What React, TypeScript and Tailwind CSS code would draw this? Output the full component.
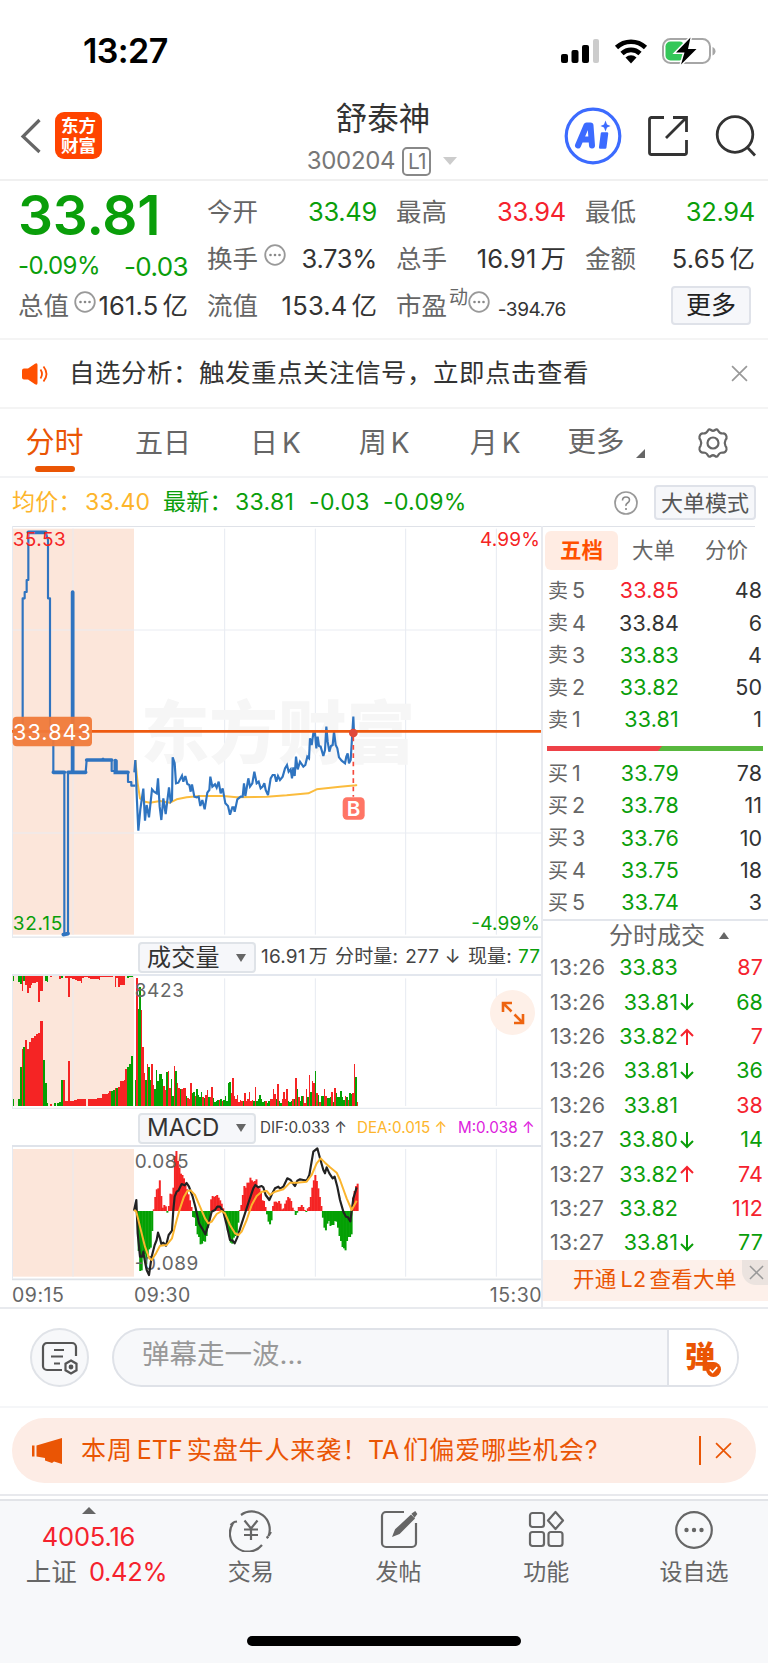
import type { ReactNode } from "react";
import clsx from "clsx";

type Tone = "up" | "down" | "flat";

const toneCls: Record<Tone, string> = {
  up: "text-[#f5222d]",
  down: "text-[#0a9e0a]",
  flat: "text-[#333]",
};

const RED = "#f52424";
const GREEN = "#04a004";

const asks: [string, string, string, Tone][] = [
  ["卖", "5", "33.85", "up"],
  ["卖", "4", "33.84", "flat"],
  ["卖", "3", "33.83", "down"],
  ["卖", "2", "33.82", "down"],
  ["卖", "1", "33.81", "down"],
];
const askQty = ["48", "6", "4", "50", "1"];
const bids: [string, string, string, Tone][] = [
  ["买", "1", "33.79", "down"],
  ["买", "2", "33.78", "down"],
  ["买", "3", "33.76", "down"],
  ["买", "4", "33.75", "down"],
  ["买", "5", "33.74", "down"],
];
const bidQty = ["78", "11", "10", "18", "3"];

const ticks: { t: string; p: string; dir?: Tone; v: string; tone: Tone }[] = [
  { t: "13:26", p: "33.83", v: "87", tone: "up" },
  { t: "13:26", p: "33.81", dir: "down", v: "68", tone: "down" },
  { t: "13:26", p: "33.82", dir: "up", v: "7", tone: "up" },
  { t: "13:26", p: "33.81", dir: "down", v: "36", tone: "down" },
  { t: "13:26", p: "33.81", v: "38", tone: "up" },
  { t: "13:27", p: "33.80", dir: "down", v: "14", tone: "down" },
  { t: "13:27", p: "33.82", dir: "up", v: "74", tone: "up" },
  { t: "13:27", p: "33.82", v: "112", tone: "up" },
  { t: "13:27", p: "33.81", dir: "down", v: "77", tone: "down" },
];

// chart series use a 3x grid; negative bar = green
const preLine =
  "68,630 68,235 74,235 74,216 80,216 80,180 85,180 85,37 137,37 144,60 144,235 150,235 150,630 160,640 160,757 193,757 193,1244 204,1240 204,757 216,757 216,216 219,216 219,757 257,757 260,720 306,720 309,716 312,720 335,720 335,753 346,753 346,722 350,722 350,757 384,757 384,786 394,786 394,797 406,797";
const priceLine =
  "403,757 406,720 411,845 415,932 421,868 425,840 430,806 435,902 440,855 447,892 456,808 462,815 470,820 474,775 479,860 484,900 490,835 497,882 507,802 512,845 516,840 518,712 524,730 528,790 535,788 546,767 550,785 556,768 562,792 568,795 572,815 576,793 583,830 590,832 596,830 601,858 607,840 614,868 622,818 628,810 631,770 637,800 645,793 650,803 656,785 662,820 668,805 676,850 684,858 690,884 697,862 701,862 704,875 712,838 722,830 728,830 732,790 736,828 745,775 750,800 757,790 763,755 770,790 776,785 782,805 788,800 793,790 797,810 804,825 812,775 818,765 824,765 829,785 834,768 840,780 848,770 855,745 861,735 866,755 872,748 876,775 880,742 884,768 888,710 893,748 900,725 910,740 916,735 922,710 927,715 930,655 935,675 940,640 945,640 949,685 953,650 957,678 962,680 970,708 975,690 979,620 983,665 988,695 993,678 998,675 1002,635 1007,675 1012,685 1017,712 1025,722 1035,730 1039,710 1043,700 1047,730 1052,720 1056,655 1060,590 1062,640";
const avgLine =
  "406,720 413,790 420,835 435,845 450,848 480,843 510,848 530,838 560,832 600,828 670,828 710,832 800,830 860,826 925,820 950,808 1020,800 1068,796 1070,793";

const preTop = [
  -15, 0, 0, -18, -25, 46, -15, 26, 52, 35, 28, 20, 20, 18, 78, 45, 45, 0, -15, -18, 0, 3, 0, 0, 0, 0, 8, -6, 0, 5, 5, 64, 5, 8,
  8, 12, 14, 14, 20, 5, 4, 4, 6, 8, 8, 10, 10, 10, 12, 4, 4, 4, 4, 4, 4, 4, 0, 34, 6, 34, 26, 26, 26, 0, -6, -4, -3,
];
const preVol = [
  -22, 0, 0, -22, -118, 172, -176, 198, 170, 192, 205, 205, 210, 217, 220, 255, 256, -138, -68, -8, 0, 6, 0, -8, 0, -8, -12,
  -78, 78, 14, 14, 136, 15, 15, 17, 17, 20, 20, 21, 22, 22, 0, 22, 22, 22, 22, 22, 24, 24, 24, 35, 35, 35, 38, 44, -45, -47,
  55, -55, 58, 76, 76, 78, 110, -117, -125, -150,
];
const vol = [
  -78, 384, -290, -358, 287, 178, 98, -78, 125, -118, -78, 127, 62, -50, -108, -75, -95, -95, -80, 60, 48, -102, 105, 55, -80,
  -30, 121, -105, 70, 55, -52, 50, 53, 54, -30, 25, 20, 70, -40, -42, 30, -50, -32, -28, -42, 28, -25, 32, 48, -28, 28, 56,
  -25, -12, -15, -18, 18, -22, 15, -18, -30, -15, -68, -72, 40, 83, 30, 20, 32, 12, 18, 15, -14, 38, 15, 20, 42, 15, 18, -15,
  56, -15, -22, -32, -22, -12, -15, 15, -10, -14, 20, 22, 50, 35, -20, 67, -15, -10, 22, 42, 20, 50, -15, -12, -14, 22, -20,
  83, -50, 28, -15, -30, 30, 8, 50, -28, 92, -42, 75, 70, -105, 38, -32, 12, -30, -30, 52, 30, -25, -25, -28, 42, -12, 55,
  -38, -28, -28, -45, -28, -18, 30, -28, 18, -40, -35, 38, 126, -86, 12,
];
const macd = [
  0, -8, -120, -180, -178, -140, -130, -160, -130, -115, -110, -60, 5, 42, 65, 68, 92, 45, 10, 18, 14, -5, 15, 52, 50, 70, 165,
  180, 150, 130, 112, 108, 98, 85, 65, 50, 32, 12, -18, -20, -45, -70, -78, -100, -98, -90, -92, -75, -50, -25, 35, 45, 42,
  45, 48, 40, 32, 22, 8, -10, -35, -58, -75, -95, -98, -80, -75, -65, -35, 3, 18, 48, 75, 70, 85, 85, 100, 92, 88, 90, 95, 75,
  68, 58, 32, 30, 12, -10, -32, -40, -28, 15, 28, 28, 25, 30, 22, 5, 8, 22, 32, 42, 38, 30, 10, 2, -12, -5, 12, 12, 18, 12, 3,
  -3, 8, 12, 42, 70, 92, 108, 90, 68, 42, 15, -20, -50, -58, -38, -30, -45, -42, -42, -30, -32, -50, -75, -90, -108, -112,
  -118, -90, -78, -78, -70, 40, 60, 75, 82,
];
const difLine =
  "402,302 409,270 413,370 420,440 426,440 430,425 434,450 440,480 447,495 455,440 464,405 470,390 474,368 480,385 484,402 490,398 498,407 506,375 516,362 520,300 524,260 530,245 535,242 545,222 554,226 560,219 567,230 578,260 586,290 597,340 606,355 616,373 625,345 635,305 645,300 652,290 660,290 670,305 680,345 690,390 698,392 704,400 712,382 722,350 735,310 748,270 760,235 766,225 775,232 785,228 790,232 797,255 808,270 818,248 825,235 835,230 840,236 850,230 862,205 872,210 880,222 885,228 892,212 900,208 910,210 920,212 928,195 940,125 952,115 960,145 970,180 975,190 980,172 988,190 998,205 1004,200 1012,230 1020,270 1030,305 1038,320 1044,322 1051,334 1060,265 1070,232";
const deaLine =
  "402,300 409,305 420,350 435,410 448,445 455,450 468,430 480,407 500,405 516,385 530,330 540,295 552,260 562,243 572,241 585,255 600,290 615,325 625,340 635,335 650,312 665,303 675,310 690,345 705,370 715,375 725,365 740,330 755,285 770,258 785,245 800,243 810,255 825,245 850,238 870,218 890,218 920,215 935,195 950,160 962,145 975,158 990,172 1010,188 1020,210 1040,265 1055,300 1070,272";

const gridX = [219, 674, 946, 1217, 1489];

function Bars({ data, x0, step, base, down }: { data: number[]; x0: number; step: number; base: number; down?: boolean }) {
  return (
    <g shapeRendering="crispEdges">
      {data.map((v, i) => {
        const h = Math.abs(v);
        if (!h) return null;
        return <rect key={i} x={x0 + i * step} y={down ? base : base - h} width={step} height={h} fill={v > 0 ? RED : GREEN} />;
      })}
    </g>
  );
}

function Grid({ top, bottom }: { top: number; bottom: number }) {
  return (
    <>
      <rect x={36} y={top} width={366} height={bottom - top} fill="#fce6da" />
      <g stroke="#e6eaf1" strokeWidth={3}>
        {gridX.map((x) => (
          <path key={x} d={`M${x} ${top}V${bottom}`} />
        ))}
        <path d={`M37.5 ${top - 8}V${bottom + 6}`} />
      </g>
    </>
  );
}

function DotsCircle({ className }: { className?: string }) {
  return (
    <svg viewBox="0 0 22 22" className={clsx("size-[22px] shrink-0", className)}>
      <circle cx="11" cy="11" r="9.8" fill="none" stroke="#999" strokeWidth="1.8" />
      <g fill="#888">
        <circle cx="6.5" cy="11" r="1.3" />
        <circle cx="11" cy="11" r="1.3" />
        <circle cx="15.5" cy="11" r="1.3" />
      </g>
    </svg>
  );
}

function Cross({ className }: { className: string }) {
  return (
    <svg viewBox="0 0 16 16" className={className} fill="none" stroke="currentColor" strokeWidth="1.6">
      <path d="M1 1L15 15M15 1L1 15" />
    </svg>
  );
}

type CellProps = { label: string; icon?: ReactNode; value: string; unit?: string; tone?: Tone };

function Cell({ label, icon, value, unit, tone = "flat" }: CellProps) {
  return (
    <div className="flex h-[47px] w-[169px] items-center justify-between whitespace-nowrap">
      <span className="-ml-px flex items-center text-[25.500px] text-[#666]">
        {label}
        {icon}
      </span>
      <span className={clsx("text-[25.500px]", unit ? "tracking-[0.2px]" : "tracking-[-0.3px]", toneCls[tone])}>
        {value}
        {unit && <span className="ml-[4px] tracking-normal">{unit}</span>}
      </span>
    </div>
  );
}

function StatusBar() {
  return (
    <div className="flex h-[100px] items-start justify-between pr-[52px] pl-[83px]">
      <div className="mt-[30px] text-[34px] leading-[42px] font-semibold tracking-[-0.6px] text-black">13:27</div>
      <div className="mt-[37px] flex items-center gap-[14px]">
        <svg viewBox="0 0 40 26" className="h-[26px] w-10">
          <rect x="1" y="16" width="7" height="9" rx="2" />
          <rect x="11.500" y="12" width="7" height="13" rx="2" />
          <rect x="22" y="7" width="7" height="18" rx="2" />
          <rect x="33" y="1" width="6" height="24" rx="2" fill="#ccc" />
        </svg>
        <svg viewBox="0 0 34 26" className="h-[26px] w-[34px]">
          <g fill="none" stroke="#000" strokeWidth="4.600">
            <path d="M2.500 9.500A21 21 0 0 1 31.500 9.500" />
            <path d="M8 15.500A13 13 0 0 1 26 15.500" />
          </g>
          <path d="M11.500 19.500A8 8 0 0 1 22.500 19.500L17 25.500Z" />
        </svg>
        <svg viewBox="0 0 54 28" className="h-7 w-[54px]">
          <rect x="1" y="2" width="47" height="24" rx="7.500" fill="none" stroke="#a6a6a6" strokeWidth="2" />
          <path d="M50.500 10v8.500c4-1.500 4-7 0-8.500z" fill="#a6a6a6" />
          <rect x="3.500" y="4.500" width="19" height="19" rx="5" fill="#34c759" />
          <path d="M28.500 .5L14 15.500h8.500L19 27.500L34.500 12H26z" stroke="#fff" strokeWidth="3" paintOrder="stroke" />
        </svg>
      </div>
    </div>
  );
}

function Header() {
  return (
    <header className="flex h-[81px] items-start border-b-2 border-[#f0f0f0]">
      <div className="flex w-[280px] items-start pl-5">
        <svg viewBox="0 0 22 36" className="mt-[18px] h-9 w-[22px]" fill="none" stroke="#666" strokeWidth="3.200">
          <path d="M19.500 2L3 18.500L19.500 34" />
        </svg>
        <div className="mt-3 ml-[13px] grid size-[47px] place-content-center rounded-[9px] bg-[#ff4400] text-center text-[17.500px] leading-[19.500px] font-bold text-white">
          <span>东方</span>
          <span>财富</span>
        </div>
      </div>
      <div className="flex w-[206px] flex-col items-center">
        <h1 className="text-[31.500px] leading-[38px] text-[#333]">舒泰神</h1>
        <div className="mt-[7px] flex h-[32px] items-center text-[24px] tracking-[-0.3px] text-[#777]">
          <span className="-ml-[2px]">300204</span>
          <span className="ml-[7px] grid h-[29px] w-[29px] place-items-center rounded-[5px] border-2 border-[#888] text-[21px] leading-none tracking-[-1px]">L1</span>
          <span className="ml-3 border-x-[7px] border-t-[8px] border-x-transparent border-t-[#ccc]" />
        </div>
      </div>
      <div className="flex flex-1 items-center pl-[78px]">
        <svg viewBox="0 0 58 58" className="mt-[7px] size-[58px]">
          <circle cx="29" cy="29" r="26.800" fill="none" stroke="#3c6bff" strokeWidth="3.200" />
          <path d="M14 38.500L22.500 18.500H26.500L28 38.500M18 32.500H27" fill="none" stroke="#3c6bff" strokeWidth="6" strokeLinejoin="round" strokeLinecap="round" />
          <path d="M38 26.500h5l-1.800 14h-5z" fill="#3c6bff" stroke="#3c6bff" strokeWidth="2.500" strokeLinejoin="round" />
          <path d="M41.500 13.500l1.500 4 3.500 1.500-3.500 1.500-1.500 4-1.500-4-3.500-1.500 3.500-1.500z" fill="#3c6bff" />
        </svg>
        <svg viewBox="0 0 42 42" className="mt-[7px] ml-[25px] size-[42px]" fill="none" stroke="#333" strokeWidth="2.800">
          <path d="M17 2.500H4.500a2 2 0 0 0-2 2v33a2 2 0 0 0 2 2h33a2 2 0 0 0 2-2V25" />
          <path d="M19 23L39 3M26 2.500H39.500V17" />
        </svg>
        <svg viewBox="0 0 42 42" className="mt-[7px] ml-[26px] size-[42px]" fill="none" stroke="#333" strokeWidth="2.800">
          <circle cx="20" cy="19.500" r="17.800" />
          <path d="M32 32L40 40.500" />
        </svg>
      </div>
    </header>
  );
}

function Quote() {
  return (
    <section className="flex h-[159px] gap-5 border-b-2 border-[#f4f4f4] pt-2 pl-[19px]">
      <div className="w-[169px]">
        <div className="-mt-px -ml-px h-[55px] text-[55px] leading-[54px] font-semibold tracking-[-0.2px] text-[#0a9e0a]">33.81</div>
        <div className="flex h-[40px] items-center justify-between pt-1.5 text-[24px] tracking-[-0.6px] text-[#0a9e0a]">
          <span className="-ml-px">-0.09%</span>
          <span className="text-[26px]">-0.03</span>
        </div>
        <Cell label="总值" icon={<DotsCircle className="mb-[10px] ml-[5px]" />} value="161.5" unit="亿" />
      </div>
      <div className="w-[169px]">
        <Cell label="今开" value="33.49" tone="down" />
        <Cell label="换手" icon={<DotsCircle className="mb-[10px] ml-[6px]" />} value="3.73%" />
        <Cell label="流值" value="153.4" unit="亿" />
      </div>
      <div className="w-[169px]">
        <Cell label="最高" value="33.94" tone="up" />
        <Cell label="总手" value="16.91" unit="万" />
        <div className="-ml-px flex h-[47px] w-[170px] items-center text-[25.500px] text-[#666]">
          市盈
          <span className="mb-4 ml-[2px] text-[19px]">动</span>
          <DotsCircle className="mb-[10px]" />
          <span className="mt-2 ml-auto text-[19px] tracking-[-0.4px] text-[#333]">-394.76</span>
        </div>
      </div>
      <div className="w-[169px]">
        <Cell label="最低" value="32.94" tone="down" />
        <Cell label="金额" value="5.65" unit="亿" />
        <div className="mt-[3px] mr-[4px] ml-auto grid h-[39px] w-[80px] place-items-center rounded-[4px] border-2 border-[#dfe2e9] bg-[#f6f7fa] text-[25px] leading-none text-[#222]">
          更多
        </div>
      </div>
    </section>
  );
}

function Notice() {
  return (
    <div className="flex h-[69px] items-center border-b-2 border-[#f4f4f4] pr-5 pl-[22px]">
      <svg viewBox="0 0 27 22" className="h-[22px] w-[27px]">
        <path d="M0 7.500a2 2 0 0 1 2-2h4L13 .8Q15.500-.5 15.500 2V20q0 2.500-2.500 1.200L6 16.500H2a2 2 0 0 1-2-2z" fill="#ff5000" />
        <path d="M18.500 6.500Q21.500 11 18.500 15.500M21.500 3.500Q27.500 11 21.500 18.500" fill="none" stroke="#ff5000" strokeWidth="1.800" />
      </svg>
      <span className="ml-5 text-[25.500px] tracking-[0.5px] text-[#333]">自选分析：触发重点关注信号，立即点击查看</span>
      <Cross className="ml-auto size-[17px] text-[#999]" />
    </div>
  );
}

function PeriodTabs() {
  return (
    <nav className="flex h-[69px] items-center border-b-2 border-[#f2f3f5] text-[28px] leading-none whitespace-nowrap text-[#666]">
      <div className="ml-[26px] flex w-[57px] flex-col items-center text-[#ea5504]">
        <span className="mt-[14px] text-[29px]">分时</span>
        <span className="mt-[9px] h-[6px] w-10 rounded-full bg-[#ea5504]" />
      </div>
      <span className="ml-[52px]">五日</span>
      <span className="ml-[59px] flex gap-1">日<span>K</span></span>
      <span className="ml-[58px] flex gap-1">周<span>K</span></span>
      <span className="ml-[60px] flex gap-1">月<span>K</span></span>
      <span className="ml-[47px] text-[28.500px]">更多</span>
      <svg viewBox="0 0 9 9" className="mt-[22px] ml-[11px] size-[9px]" fill="#666">
        <path d="M9 0V9H0z" />
      </svg>
      <svg viewBox="0 0 34 34" className="ml-[51px] size-[34px]" fill="none" stroke="#666" strokeWidth="2.200" strokeLinejoin="round">
        <path d="M12 4.500Q13 2.500 15 4Q17 5.500 19 4Q21 2.500 22 4.500Q23.500 7.500 26.500 7.500Q29.500 7 30.500 10.500Q31 12.500 29.500 14Q28 17 29.500 20Q31 21.500 30.500 23.500Q29.500 27 26.500 26.500Q23.500 26.500 22 29.500Q21 31.500 19 30Q17 28.500 15 30Q13 31.500 12 29.500Q10.500 26.500 7.500 26.500Q4.500 27 3.500 23.500Q3 21.500 4.500 20Q6 17 4.500 14Q3 12.500 3.500 10.500Q4.500 7 7.500 7.500Q10.500 7.500 12 4.500Z" />
        <circle cx="17" cy="17" r="5.500" />
      </svg>
    </nav>
  );
}

function InfoRow() {
  return (
    <div className="flex h-[48px] items-center pt-px pr-[12px] pl-3 text-[23px] tracking-[0.3px] whitespace-nowrap">
      <span className="w-[73px] text-[#fdb52b]">均价：</span>
      <span className="w-[78px] text-[#fdb52b]">33.40</span>
      <span className="flex text-[#0a9e0a]">
        <span className="w-[72px]">最新：</span>
        <span className="w-[74px]">33.81</span>
        <span className="w-[74px]">-0.03</span>
        <span>-0.09%</span>
      </span>
      <svg viewBox="0 0 26 26" className="ml-auto size-[26px]">
        <circle cx="13" cy="13" r="11" fill="none" stroke="#999" strokeWidth="1.700" />
        <path d="M9.500 10.500q0-3.500 3.500-3.500t3.500 3q0 1.800-2 3t-1.500 3M13 18v2" fill="none" stroke="#888" strokeWidth="1.600" />
      </svg>
      <div className="ml-[15px] grid h-[35px] w-[102px] place-items-center rounded-[4px] border-2 border-[#dfe2e9] bg-[#f6f7fa] text-[22px] leading-none tracking-normal text-[#555]">
        大单模式
      </div>
    </div>
  );
}

function Picker({ label }: { label: string }) {
  return (
    <div className="mt-px ml-[126px] flex h-[31px] w-[118px] shrink-0 items-center justify-between rounded-[4px] border-2 border-[#dfe3e8] bg-[#f6f7fa] pr-2 pl-[7px] text-[24px] leading-none text-[#333]">
      {label}
      <span className="border-x-[5px] border-t-[8px] border-x-transparent border-t-[#666]" />
    </div>
  );
}

function Charts() {
  return (
    <div className="w-[530px]">
      <svg viewBox="36 18 1590 1236" className="block h-[412px] w-[530px] font-['Inter','Noto_Sans_CJK_SC',sans-serif]">
        <Grid top={26} bottom={1244} />
        <path d="M36 330H1626M36 939H1626" stroke="#e9ecf2" strokeWidth="3" />
        <path d="M36 1251.500H1626" stroke="#dfe3e8" strokeWidth="4" />
        <text x="422" y="713" fontSize="206" fontWeight="900" fill="#f6f6f6">东方财富</text>
        <polyline points={preLine} fill="none" stroke="#2f74c0" strokeWidth="6.500" strokeLinejoin="round" />
        <path d="M85 37H137M160 757H193M204 757H257M260 720H335M346 722V757H384M190 1244L204 1241M218 216V757" fill="none" stroke="#2f74c0" strokeWidth="11" strokeLinecap="round" />
        <polyline points={avgLine} fill="none" stroke="#fbbc3d" strokeWidth="6" strokeLinejoin="round" />
        <polyline points={priceLine} fill="none" stroke="#2f74c0" strokeWidth="6.500" strokeMiterlimit="3" />
        <text x="38" y="77" fontSize="57" fill={RED} textLength="159">35.53</text>
        <text x="38" y="1229" fontSize="57" fill="#0a9e0a" textLength="149">32.15</text>
        <text x="1620" y="77" fontSize="57" fill={RED} textAnchor="end" textLength="180">4.99%</text>
        <text x="1620" y="1229" fontSize="57" fill="#0a9e0a" textAnchor="end" textLength="206">-4.99%</text>
        <path d="M36 634H1626" stroke="#ee5a10" strokeWidth="8" />
        <rect x="38" y="590" width="238" height="89" rx="12" fill="#f07a3a" fillOpacity=".95" />
        <text x="39" y="660" fontSize="65" fill="#fff" textLength="234">33.843</text>
        <path d="M1060 650V830" stroke="#f5493c" strokeWidth="5" strokeDasharray="14 11" />
        <circle cx="1060" cy="639" r="13" fill="#e0493a" />
        <rect x="1028" y="832" width="66" height="67" rx="13" fill="#ff7565" />
        <text x="1061" y="888" fontSize="62" fontWeight="600" fill="#fff" textAnchor="middle">B</text>
      </svg>

      <div className="flex h-[38px] items-center border-b-2 border-[#e3e7ee] text-[19px] tracking-[0.2px] whitespace-nowrap text-[#444] *:mt-[3px]">
        <Picker label="成交量" />
        <span className="ml-[5px]">16.91</span>
        <span className="ml-[3px]">万</span>
        <span className="ml-[7px]">分时量:</span>
        <span className="ml-[7px]">277 ↓</span>
        <span className="ml-[7px]">现量:</span>
        <span className="ml-[6px] text-[#0a9e0a]">77</span>
      </div>

      <div className="relative h-[133px]">
        <svg viewBox="36 137 1590 399" className="block h-[133px] w-[530px] font-[Inter]">
          <Grid top={144} bottom={527} />
          <rect x="36" y="137" width="366" height="10" fill="#fce6da" />
          <path d="M36 534H1626" stroke="#e6eaef" strokeWidth="4" />
          <Bars data={preTop} x0={38} step={5.37} base={137} down />
          <Bars data={preVol} x0={38} step={5.37} base={527} />
          <Bars data={vol} x0={404} step={4.5} base={527} />
          <text x="404" y="201" fontSize="57" fill="#666" textLength="148">8423</text>
        </svg>
        <div className="absolute top-[14px] right-[7px] grid size-[45px] place-items-center rounded-full bg-[#fef0e8]">
          <svg viewBox="0 0 24 24" className="size-6" fill="none" stroke="#ee6410" strokeWidth="2.600">
            <path d="M11 2H2V11M2.500 2.500L10.500 10.500M13 22H22V13M21.500 21.500L13.500 13.500" />
          </svg>
        </div>
      </div>

      <div className="flex h-[38px] items-center border-b-2 border-[#dfe3ea] text-[15.200px] whitespace-nowrap *:mt-[2px]">
        <Picker label="MACD" />
        <span className="ml-[4px] w-[97px] text-[#444]">DIF:0.033 ↑</span>
        <span className="w-[101px] text-[#fdb52b]">DEA:0.015 ↑</span>
        <span className="text-[#dd22dd]">M:0.038 ↑</span>
      </div>

      <svg viewBox="36 111 1590 402" className="block h-[134px] w-[530px] font-[Inter]">
        <Grid top={117} bottom={500} />
        <path d="M36 508H1626" stroke="#dfe3e8" strokeWidth="5" />
        {macd.map((v, i) => (
          <rect key={i} x={404 + i * 4.53} y={v > 0 ? 303 - v : 303} width={6} height={Math.abs(v)} fill={v > 0 ? RED : GREEN} />
        ))}
        <text x="404" y="174" fontSize="57" fill="#666" textLength="162">0.085</text>
        <text x="404" y="481" fontSize="57" fill="#666" textLength="191">-0.089</text>
        <polyline points={difLine} fill="none" stroke="#222" strokeWidth="6.500" strokeLinejoin="round" />
        <polyline points={deaLine} fill="none" stroke="#fbb52e" strokeWidth="6" strokeLinejoin="round" />
      </svg>

      <div className="flex h-[26px] items-center pt-[3px] text-[19.500px] tracking-[0.5px] text-[#666]">
        <span className="w-[122px]">09:15</span>
        <span>09:30</span>
        <span className="ml-auto">15:30</span>
      </div>
    </div>
  );
}

function Level({ row, qty }: { row: [string, string, string, Tone]; qty: string }) {
  const [side, n, price, tone] = row;
  return (
    <div className="flex h-[32.200px] items-center pr-[6px] pl-[5px] text-[21.500px] leading-none">
      <span className="w-6 text-[20px] text-[#666]">{side}</span>
      <span className="text-[#666]">{n}</span>
      <span className={clsx("ml-auto tracking-[0.2px]", toneCls[tone])}>{price}</span>
      <span className="w-[83px] text-right text-[#333]">{qty}</span>
    </div>
  );
}

function Depth() {
  return (
    <aside className="-ml-px flex w-[227px] shrink-0 flex-col border-l-2 border-[#e8eaef]">
      <div className="mt-[5px] flex h-[39px] items-center pl-[2px] text-[21.500px] leading-none text-[#666]">
        <span className="grid h-[39px] w-[73px] place-items-center rounded-[6px] bg-[#ffece3] font-bold text-[#ff5000]">五档</span>
        <span className="ml-[14px]">大单</span>
        <span className="ml-[30px]">分价</span>
      </div>
      <div className="mt-[5px]">
        {asks.map((r, i) => (
          <Level key={r[1]} row={r} qty={askQty[i]} />
        ))}
      </div>
      <svg viewBox="0 0 216 5" className="mt-[10px] ml-[4px] block h-[5px] w-[216px]">
        <rect width="216" height="5" fill="#58b83e" />
        <path d="M0 0H115L111 5H0z" fill="#ee4148" />
      </svg>
      <div className="mt-[7px]">
        {bids.map((r, i) => (
          <Level key={r[1]} row={r} qty={bidQty[i]} />
        ))}
      </div>
      <div className="flex h-[32px] items-center border-t-2 border-[#e3e6ec] pl-[66px] text-[24px] leading-none text-[#666]">
        分时成交
        <span className="ml-[14px] border-x-[5px] border-b-[7px] border-x-transparent border-b-[#666]" />
      </div>
      <div>
        {ticks.map((k, i) => (
          <div key={i} className="flex h-[34.400px] items-center pr-[5px] pl-[7px] text-[21.500px] leading-none tracking-[0.1px]">
            <span className="w-[62px] text-[#666]">{k.t}</span>
            <span className="w-[66px] text-right text-[#0a9e0a]">{k.p}</span>
            <svg viewBox="0 0 14 18" className={clsx("ml-[2px] h-[18px] w-[14px]", k.dir && toneCls[k.dir])} fill="none" stroke="currentColor" strokeWidth="2">
              {k.dir === "up" && <path d="M7 17V2M1 8L7 2L13 8" />}
              {k.dir === "down" && <path d="M7 1V16M1 10L7 16L13 10" />}
            </svg>
            <span className={clsx("ml-auto", toneCls[k.tone])}>{k.v}</span>
          </div>
        ))}
      </div>
      <div className="relative flex h-[41px] items-center bg-[#fdf0ea] pb-[2px] pl-[30px] text-[21.500px] leading-none tracking-[0.3px] text-[#ea5504]">
        开通<span className="mr-[3px] ml-[4px]">L2</span>查看大单
        <span className="absolute top-0 right-0 grid h-[25px] w-[26px] place-items-center rounded-bl-[14px] bg-[#ebe3df]">
          <Cross className="ml-[3px] size-[15px] text-[#999]" />
        </span>
      </div>
    </aside>
  );
}

function Barrage() {
  return (
    <div className="flex h-[99px] items-center border-t-2 border-[#e8eaee] pl-[30px]">
      <div className="grid size-[59px] place-items-center rounded-full border-2 border-[#e0e3e8] bg-[#f7f8fa]">
        <svg viewBox="0 0 38 34" className="h-[34px] w-[38px]" fill="none" stroke="#555" strokeWidth="2.200">
          <path d="M21 29H6a4 4 0 0 1-4-4V6a4 4 0 0 1 4-4H31a4 4 0 0 1 4 4V15" />
          <path d="M13 9H23M10 15.500H22M13 22.500H19" />
          <path d="M30 19.500l5.500 3.200v6.600L30 32.500l-5.500-3.200v-6.600z" />
          <circle cx="30" cy="26" r="1.300" fill="#555" />
        </svg>
      </div>
      <div className="ml-[23px] flex h-[59px] w-[627px] items-center overflow-hidden rounded-full border-2 border-[#dfe2e8] bg-[#f7f8fa]">
        <span className="pb-1.5 pl-[28px] text-[27.500px] leading-none text-[#999]">弹幕走一波...</span>
        <div className="relative ml-auto h-full w-[70px] border-l-2 border-[#dfe2e8] bg-white">
          <span className="block pt-[11px] pl-4 text-[30px] leading-none font-black text-[#ea5504]">弹</span>
          <svg viewBox="0 0 16 16" className="absolute top-[32px] left-[37px] size-[15px]">
            <circle cx="8" cy="8" r="8" fill="#ea5504" />
            <path d="M4 8l3 3 5-5.500" fill="none" stroke="#fff" strokeWidth="1.800" />
          </svg>
        </div>
      </div>
    </div>
  );
}

function Promo() {
  return (
    <div className="h-[88px] border-t-2 border-[#f5f6f8] px-3 pt-[10px]">
      <div className="flex h-[65px] items-center rounded-full bg-[#fdece5] pr-6 pl-5 text-[#ea5504]">
        <svg viewBox="0 0 30 26" className="h-[26px] w-[30px]" fill="currentColor">
          <path d="M0 7.500h2.500v11H0zM4.500 7.500L30 0V26L22 23.500L20 25L13 22.500V20L4.500 18.500z" />
        </svg>
        <span className="ml-[19px] text-[25px] tracking-[0.9px] whitespace-nowrap">
          本周<span className="mx-[4px] tracking-[0]">ETF</span>实盘牛人来袭！<span className="mr-[4px] tracking-[0]">TA</span>们偏爱哪些机会?
        </span>
        <span className="ml-auto h-[29px] w-[2px] bg-[#ea5504]" />
        <Cross className="ml-[14px] size-[17px]" />
      </div>
    </div>
  );
}

function TabItem({ label, children }: { label: string; children: ReactNode }) {
  return (
    <div className="flex w-[147.700px] flex-col items-center">
      <svg viewBox="0 0 44 44" className="mt-[7px] size-11" fill="none" stroke="#666" strokeWidth="2.200">
        {children}
      </svg>
      <span className="mt-[8px] text-[23px] leading-[24px] text-[#666]">{label}</span>
    </div>
  );
}

function TabBar() {
  return (
    <footer className="h-[169px] border-t-2 border-[#e8e9ed] bg-[#f7f8fa]">
      <div className="h-[3px] bg-white" />
      <div className="flex h-[136px] border-t-2 border-[#e2e4e8]">
        <div className="flex w-[177px] flex-col items-center whitespace-nowrap">
          <span className="mt-[6px] border-x-[7px] border-b-[7px] border-x-transparent border-b-[#666]" />
          <span className="mt-[10px] text-[25.500px] leading-[26px] tracking-[-0.2px] text-[#f5222d]">4005.16</span>
          <span className="mt-[9px] mr-[-16px] text-[25.500px] leading-[26px] text-[#666]">
            上证 <span className="ml-[5px] tracking-[-0.3px] text-[#f5222d]">0.42%</span>
          </span>
        </div>
        <TabItem label="交易">
          <path d="M12 7A18 18 0 0 1 39.500 28L42 24M39.500 28.500L37.500 30M33 37A18 18 0 0 1 5 14L1.500 17M5 14L8 13.500" />
          <path d="M15.500 12.500L22 20.500L28.500 12.500M22 20.500V32M15 21.500H29M15 27H29" />
        </TabItem>
        <TabItem label="发帖">
          <path d="M27 4H9a4 4 0 0 0-4 4V35a4 4 0 0 0 4 4H35a4 4 0 0 0 4-4V15" />
          <path d="M17 27L19 22L34 8L36.500 10.500L22 25ZM36 6L38 4.500L39 6L37.500 8Z" fill="#666" />
        </TabItem>
        <TabItem label="功能">
          <rect x="6" y="5" width="14" height="14" rx="2.500" />
          <rect x="6" y="24" width="14" height="14" rx="2.500" />
          <rect x="24.500" y="24" width="14" height="14" rx="2.500" />
          <path d="M31.500 4L39 12.500L31.500 21L24 12.500Z" strokeLinejoin="round" />
        </TabItem>
        <TabItem label="设自选">
          <circle cx="22" cy="22" r="17.800" />
          <g fill="#666" stroke="none">
            <circle cx="14.500" cy="22" r="2.200" />
            <circle cx="22" cy="22" r="2.200" />
            <circle cx="29.500" cy="22" r="2.200" />
          </g>
        </TabItem>
      </div>
      <div className="mx-auto mt-[1px] h-[10px] w-[274px] rounded-full bg-black" />
    </footer>
  );
}

export default function App() {
  return (
    <div className="h-[1663px] w-[768px] overflow-hidden bg-white font-['Inter','Noto_Sans_CJK_SC',sans-serif]" lang="zh-CN">
      <StatusBar />
      <Header />
      <Quote />
      <Notice />
      <PeriodTabs />
      <InfoRow />
      <main className="ml-3 flex h-[781px] w-[743px] shadow-[inset_0_1px_0_#dfe2e8]">
        <Charts />
        <Depth />
      </main>
      <Barrage />
      <Promo />
      <TabBar />
    </div>
  );
}
